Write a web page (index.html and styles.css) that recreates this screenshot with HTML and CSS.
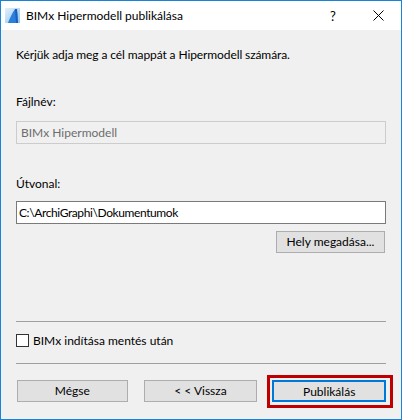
FILE: index.html
```html
<!DOCTYPE html>
<html lang="hu">
<head>
<meta charset="utf-8">
<title>BIMx Hipermodell publikálása</title>
<link rel="stylesheet" href="styles.css">
</head>
<body>
<div class="window">
  <div class="titlebar">
    <svg class="app-icon" width="15" height="15" viewBox="0 0 15 15">
      <defs>
        <linearGradient id="bg" x1="0" y1="0" x2="1" y2="1">
          <stop offset="0" stop-color="#e4f1fc"/>
          <stop offset="1" stop-color="#8cc3ee"/>
        </linearGradient>
      </defs>
      <rect x="0" y="0" width="15" height="15" fill="url(#bg)"/>
      <path d="M3 15 C5 10 7 5 10 1 L12 1 L13 15 Z" fill="#2a7fdc"/>
      <path d="M10 1 L12 1 L13 15 L11 15 Z" fill="#1a5fb8"/>
    </svg>
    <span class="title">BIMx Hipermodell publikálása</span>
    <span class="help">?</span>
    <svg class="close" width="11" height="11" viewBox="0 0 11 11">
      <path d="M0.5 0.5 L10.5 10.5 M10.5 0.5 L0.5 10.5" stroke="#000" stroke-width="1" fill="none"/>
    </svg>
  </div>
  <div class="content">
    <p class="intro">Kérjük adja meg a cél mappát a Hipermodell számára.</p>
    <p class="label label-file">Fájlnév:</p>
    <div class="field field-disabled">BIMx Hipermodell</div>
    <p class="label label-path">Útvonal:</p>
    <div class="field field-path">C:\ArchiGraphi\Dokumentumok</div>
    <div class="browse-row">
      <button class="btn btn-browse">Hely megadása...</button>
    </div>
    <hr class="sep sep-top">
    <label class="check-row">
      <span class="checkbox"></span>
      <span>BIMx indítása mentés után</span>
    </label>
    <hr class="sep sep-bottom">
    <div class="button-row">
      <button class="btn btn-cancel">Mégse</button>
      <button class="btn btn-back">&lt; &lt; Vissza</button>
      <button class="btn btn-publish">Publikálás</button>
    </div>
  </div>
</div>
</body>
</html>
```

FILE: styles.css
```css
* { box-sizing: border-box; }
html, body { margin: 0; padding: 0; }
body {
  width: 402px;
  height: 420px;
  font-family: "Lato", "Noto Sans", sans-serif;
  font-size: 12px;
  color: #000;
  background: #f0f0f0;
}
.window {
  width: 402px;
  height: 420px;
  border: 1px solid #1883d7;
  display: flex;
  flex-direction: column;
  background: #f0f0f0;
}
.titlebar {
  height: 29px;
  background: #fff;
  display: flex;
  align-items: center;
  padding-left: 4px;
  flex-shrink: 0;
}
.app-icon { flex-shrink: 0; }
.title {
  margin-left: 6px;
  font-size: 12px;
  line-height: 16px;
}
.help {
  margin-left: auto;
  font-size: 13px;
  line-height: 16px;
  width: 10px;
  text-align: center;
  margin-right: 35px;
}
.close { margin-right: 17px; flex-shrink: 0; }
.content {
  flex: 1;
  padding: 0 15px;
  display: flex;
  flex-direction: column;
}
p { margin: 0; }
.intro { margin-top: 17px; line-height: 16px; letter-spacing: -0.1px; }
.label { line-height: 16px; }
.label-file { margin-top: 31px; }
.label-path { margin-top: 32px; }
.field {
  height: 23px;
  width: 370px;
  line-height: 21px;
  padding: 0 4px;
  white-space: nowrap;
}
.field-disabled {
  margin-top: 11px;
  border: 1px solid #cccccc;
  background: #f0f0f0;
  color: #6d6d6d;
}
.field-path {
  margin-top: 9px;
  border: 1px solid #7a7a7a;
  background: #fff;
  padding-left: 2px;
  letter-spacing: -0.4px;
}
.browse-row {
  display: flex;
  justify-content: flex-end;
  margin-top: 7px;
  width: 370px;
}
.btn {
  font-family: inherit;
  font-size: 12px;
  color: #000;
  height: 22px;
  background: #e1e1e1;
  border: 1px solid #adadad;
  padding: 0;
  margin: 0;
  line-height: 20px;
  border-radius: 0;
}
.btn-browse { width: 109px; margin-right: 1px; }
.sep {
  margin: 68px 0 0 0;
  width: 370px;
  height: 1px;
  border: 0;
  background: #a0a0a0;
}
.check-row {
  margin-top: 12px;
  height: 13px;
  display: flex;
  align-items: center;
  line-height: 16px;
}
.checkbox {
  width: 13px;
  height: 13px;
  border: 1px solid #333;
  background: #fff;
  margin-right: 4px;
  flex-shrink: 0;
}
.sep-bottom { margin-top: 16px; }
.button-row {
  margin-top: 16px;
  display: flex;
  padding-left: 1px;
}
.btn-cancel { width: 111px; }
.btn-back { width: 114px; margin-left: 16px; }
.btn-publish {
  width: 114px;
  margin-left: 15px;
  border: 2px solid #0078d7;
  position: relative;
}
.btn-publish::after {
  content: "";
  position: absolute;
  top: -7px;
  left: -7px;
  right: -9px;
  bottom: -8px;
  border: 3px solid #c00000;
}
```
